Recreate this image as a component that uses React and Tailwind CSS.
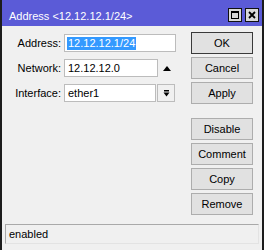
import React from 'react';

const btn =
  'w-[62px] h-[22px] flex items-center justify-center bg-[#e1e1e1] border border-[#adadad]';

function TitleButton({ children }) {
  return (
    <div className="w-[14px] h-[14px] border border-[#111] bg-[#d9d9d9] flex items-center justify-center">
      {children}
    </div>
  );
}

export default function App() {
  return (
    <div className="w-[268px] h-[250px] bg-white font-['Liberation_Sans',Arial,sans-serif] text-[11px] text-black">
      <div className="w-[264px] h-[250px] border-x-2 border-[#1c1c1c] bg-[#f0f0f0] flex flex-col">
        {/* title bar */}
        <div className="h-[26px] shrink-0 bg-[#5b5bd7] flex items-start justify-between pl-[7px] pr-[3px]">
          <span className="text-white leading-[11px] mt-[11px]">Address &lt;12.12.12.1/24&gt;</span>
          <div className="flex gap-[3px] mt-[8px]">
            <TitleButton>
              <div className="w-[8px] h-[8px] border border-black border-t-2" />
            </TitleButton>
            <TitleButton>
              <svg width="8" height="8" viewBox="0 0 8 8">
                <path d="M1 1 L7 7 M7 1 L1 7" stroke="#000" strokeWidth="1.8" />
              </svg>
            </TitleButton>
          </div>
        </div>

        {/* body */}
        <div className="flex-1 flex">
          <div className="w-[189px] pt-[8px] flex flex-col gap-[7px]">
            <div className="flex items-center h-[18px]">
              <span className="w-[59px] text-right">Address:</span>
              <div className="ml-[3px] w-[112px] h-[18px] bg-white border border-[#bcbcbc] flex items-center pl-[2px]">
                <span className="bg-[#3399ff] text-white leading-[13px] px-[1px]">12.12.12.1/24</span>
              </div>
            </div>
            <div className="flex items-center h-[18px]">
              <span className="w-[59px] text-right">Network:</span>
              <div className="ml-[3px] w-[94px] h-[18px] bg-white border border-[#bcbcbc] flex items-center pl-[3px]">
                12.12.12.0
              </div>
              <svg className="ml-[5px]" width="8" height="5" viewBox="0 0 8 5">
                <polygon points="0,5 8,5 4,0" fill="#000" />
              </svg>
            </div>
            <div className="flex items-center h-[18px]">
              <span className="w-[59px] text-right">Interface:</span>
              <div className="ml-[3px] w-[92px] h-[18px] bg-white border border-[#bcbcbc] flex items-center pl-[3px]">
                ether1
              </div>
              <div className="ml-[1px] w-[18px] h-[18px] border border-[#bcbcbc] bg-[#f0f0f0] flex items-center justify-center">
                <svg width="7" height="7" viewBox="0 0 7 7">
                  <rect x="1" y="0" width="5" height="1.5" fill="#000" />
                  <polygon points="0.5,2.5 6.5,2.5 3.5,6.5" fill="#000" />
                </svg>
              </div>
            </div>
          </div>

          <div className="pt-[6px] flex flex-col gap-[3px]">
            <div className={`${btn} !border-[#3a3a3a]`}>OK</div>
            <div className={btn}>Cancel</div>
            <div className={btn}>Apply</div>
            <div className={`${btn} mt-[11px]`}>Disable</div>
            <div className={btn}>Comment</div>
            <div className={btn}>Copy</div>
            <div className={btn}>Remove</div>
          </div>
        </div>

        {/* status bar */}
        <div className="mx-[3px] mb-[6px] h-[20px] shrink-0 border border-[#a9a9a9] border-r-[#e3e3e3] border-b-[#e3e3e3] flex items-center pl-[3px]">
          enabled
        </div>
      </div>
    </div>
  );
}
